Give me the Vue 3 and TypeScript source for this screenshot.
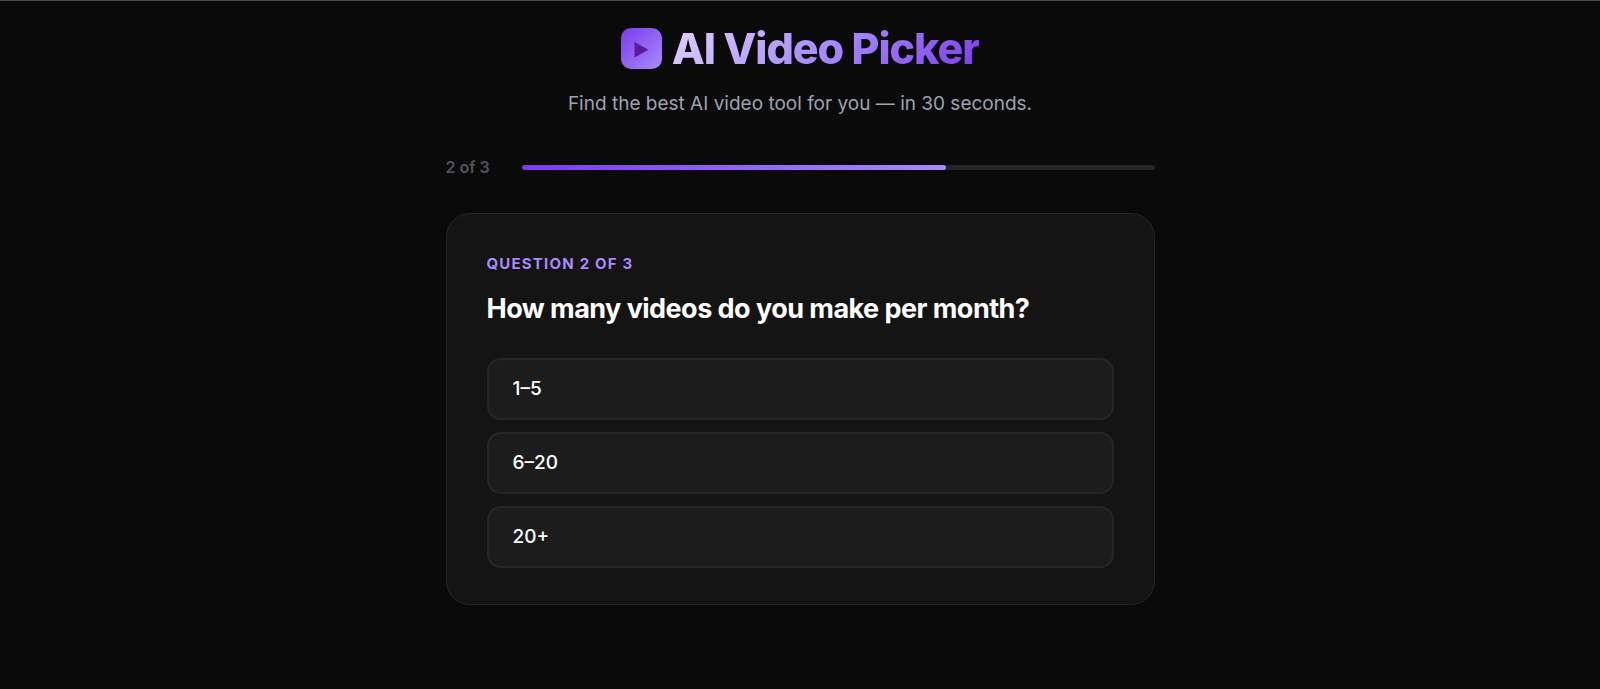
<script setup lang="ts">
const total = 3
const current = 2
const progress = 67
const options: string[] = ['1–5', '6–20', '20+']
</script>

<template>
  <main class="page">
    <header class="header">
      <h1 class="title">
        <svg class="logo" viewBox="0 0 41 41" aria-hidden="true">
          <defs>
            <linearGradient id="logo-fill" x1="0" y1="0" x2="1" y2="1">
              <stop offset="0" stop-color="#7c3aed" />
              <stop offset="1" stop-color="#a78bfa" />
            </linearGradient>
          </defs>
          <rect width="41" height="41" rx="10" fill="url(#logo-fill)" />
          <path d="M13.5 14 L27.5 21.8 L13.5 29.6 Z" fill="#581c9c" />
        </svg>
        <span class="name">AI Video Picker</span>
      </h1>
      <p class="tagline">Find the best AI video tool for you — in 30 seconds.</p>
    </header>
    <div class="progress">
      <span class="count">{{ current }} of {{ total }}</span>
      <div class="track"><div class="bar" :style="{ width: progress + '%' }"></div></div>
    </div>
    <section class="card">
      <p class="step">Question {{ current }} of {{ total }}</p>
      <h2 class="question">How many videos do you make per month?</h2>
      <div class="options">
        <button v-for="option in options" :key="option" type="button" class="option">{{ option }}</button>
      </div>
    </section>
  </main>
</template>

<style>
body {
  background: #0a0a0a;
}
</style>

<style scoped>
* {
  box-sizing: border-box;
  margin: 0;
}
.page {
  min-height: 100vh;
  padding: 22px 24px 64px;
  border-top: 1px solid #4a4a4a;
  background: #0a0a0a;
  color: #fff;
  font-family: Inter, "Liberation Sans", sans-serif;
}
.header {
  text-align: center;
}
.title {
  display: flex;
  align-items: center;
  justify-content: center;
  gap: 10px;
  font-size: 43px;
  line-height: 51px;
  font-weight: 800;
  letter-spacing: -0.025em;
}
.logo {
  width: 41px;
  height: 41px;
}
.name {
  background: linear-gradient(135deg, #e0d4ff 0%, #a78bfa 50%, #7c3aed 100%);
  background-clip: text;
  -webkit-background-clip: text;
  color: transparent;
}
.tagline {
  margin-top: 15px;
  font-size: 19px;
  line-height: 30px;
  color: #9ca3af;
}
.progress {
  display: flex;
  align-items: center;
  gap: 32px;
  max-width: 709px;
  margin: 34px auto 0;
}
.count {
  font-size: 16px;
  line-height: 28px;
  font-weight: 600;
  color: #52525b;
}
.track {
  flex: 1;
  height: 5px;
  border-radius: 4px;
  background: #262626;
  overflow: hidden;
}
.bar {
  height: 100%;
  border-radius: 4px;
  background: linear-gradient(90deg, #7c3aed, #a78bfa);
}
.card {
  max-width: 709px;
  margin: 32px auto 0;
  padding: 37px 40px 36px;
  border: 1px solid #262626;
  border-radius: 24px;
  background: #141414;
}
.step {
  font-size: 15px;
  line-height: 26px;
  font-weight: 700;
  letter-spacing: 0.08em;
  text-transform: uppercase;
  color: #a78bfa;
}
.question {
  margin-top: 14px;
  font-size: 27px;
  line-height: 36px;
  font-weight: 700;
  letter-spacing: -0.02em;
}
.options {
  display: flex;
  flex-direction: column;
  gap: 12px;
  margin-top: 31px;
}
.option {
  height: 62px;
  padding: 0 24px;
  border: 2px solid #262626;
  border-radius: 14px;
  background: #1c1c1c;
  color: #fff;
  font: 500 19px/28px Inter, "Liberation Sans", sans-serif;
  text-align: left;
  cursor: pointer;
}
</style>
